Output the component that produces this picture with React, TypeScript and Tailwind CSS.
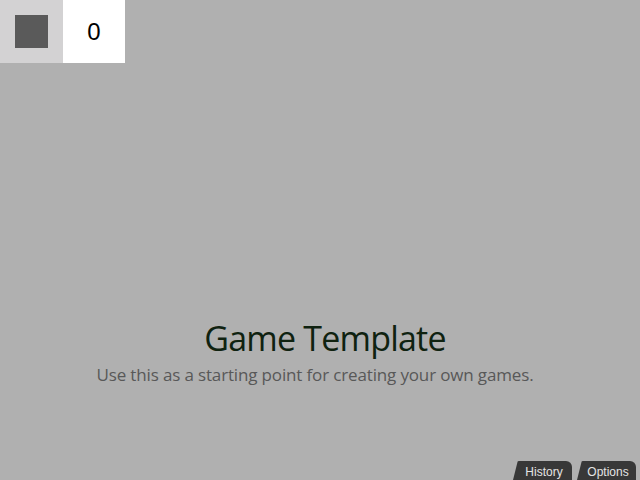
import React from 'react';

const Tab: React.FC<{ label: string }> = ({ label }) => (
    <div className="h-[19px] w-[59px] bg-[#383838] rounded-t-[6px] [clip-path:polygon(8%_0,100%_0,100%_100%,0_100%)] flex items-center justify-center pl-[3px]">
        <span className="text-[12px] text-[#e4e4e4] font-['Liberation_Sans',sans-serif] leading-none pt-[2px]">{label}</span>
    </div>
);

export default function App() {
    return (
        <div className="w-[640px] h-[480px] bg-[#b0b0b0] flex flex-col overflow-hidden">
            <header className="flex h-[63px]">
                <div className="w-[63px] h-[63px] bg-[#d3d2d3] flex items-center justify-center">
                    <div className="w-[33px] h-[33px] bg-[#5a5a5a]" />
                </div>
                <div className="w-[62px] h-[63px] bg-white flex items-center justify-center">
                    <span className="text-[24px] text-black font-['Liberation_Sans',sans-serif]">0</span>
                </div>
            </header>

            <main className="flex-1 flex flex-col items-center justify-end pb-[75px] font-['Open_Sans',sans-serif]">
                <h1 className="text-[34px] leading-[40px] text-[#0f2210] tracking-[-0.8px] ml-[10px]">Game Template</h1>
                <p className="text-[17px] leading-[22px] text-[#585858] mt-[6px] mr-[10px] tracking-[-0.15px]">
                    Use this as a starting point for creating your own games.
                </p>
            </main>

            <footer className="h-[19px] flex justify-end gap-[5px] pr-[4px]">
                <Tab label="History" />
                <Tab label="Options" />
            </footer>
        </div>
    );
}
